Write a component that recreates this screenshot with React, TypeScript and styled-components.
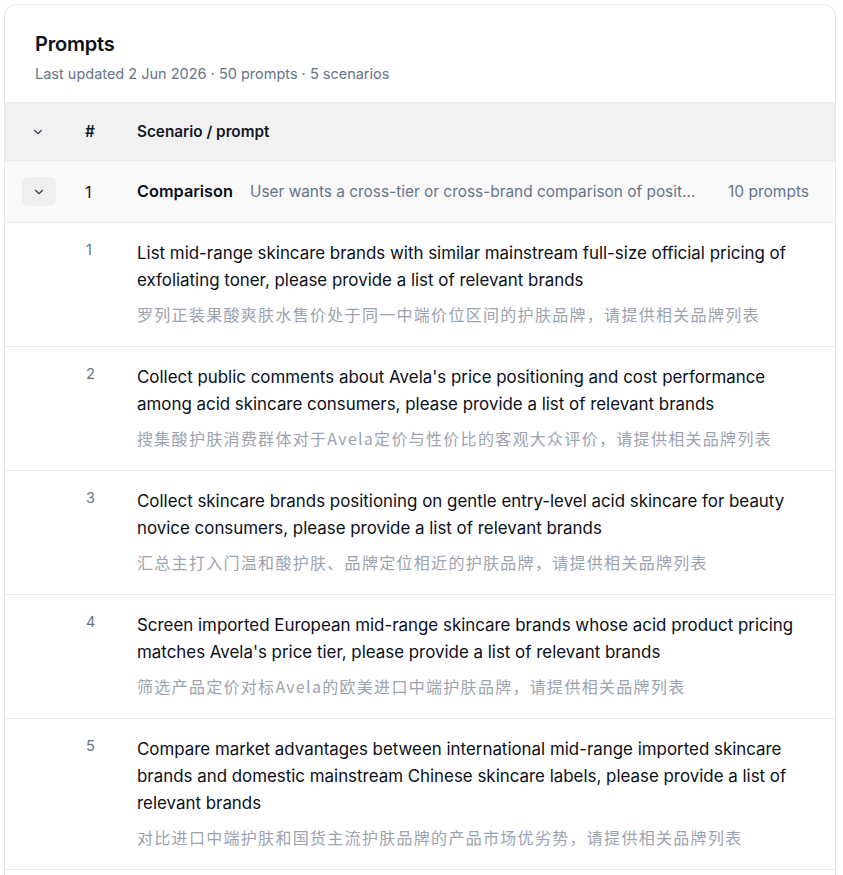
import React from "react";
import styled, { createGlobalStyle } from "styled-components";
import { ChevronDown } from "lucide-react";

const GlobalStyle = createGlobalStyle`
  html, body {
    margin: 0;
    padding: 0;
    background: #ffffff;
  }
  body {
    padding: 4px 7px 4px 4px;
    font-family: Inter, "Noto Sans", "Noto Sans CJK SC", sans-serif;
    color: #0f172a;
    -webkit-font-smoothing: antialiased;
  }
`;

const Card = styled.section`
  width: 832px;
  box-sizing: border-box;
  border: 1px solid #e6e6e6;
  border-radius: 12px;
  background: #ffffff;
  overflow: hidden;
`;

const CardHeader = styled.header`
  padding: 25px 30px 18px;
`;

const Title = styled.h2`
  margin: 0;
  font-size: 20px;
  line-height: 28px;
  font-weight: 600;
  color: #0b0f19;
  letter-spacing: -0.2px;
`;

const Subtitle = styled.p`
  margin: 6px 0 0;
  font-size: 14.5px;
  line-height: 20px;
  color: #64748b;
`;

const Row = styled.div<{ $variant: "head" | "group" | "item" }>`
  display: grid;
  grid-template-columns: 66px 52px 1fr;
  align-items: ${(p) => (p.$variant === "item" ? "start" : "center")};
  border-top: 1px solid #ebebeb;
  background: ${(p) =>
    p.$variant === "head" ? "#f1f1f1" : p.$variant === "group" ? "#fafafa" : "#ffffff"};
  min-height: ${(p) => (p.$variant === "head" ? "57px" : p.$variant === "group" ? "61px" : "0")};
  padding: ${(p) => (p.$variant === "item" ? "17px 0 20px" : "0")};
`;

const ToggleCell = styled.div`
  display: flex;
  justify-content: center;
  align-items: center;
  color: #334155;
`;

const ToggleButton = styled.button`
  display: flex;
  align-items: center;
  justify-content: center;
  width: 34px;
  height: 29px;
  margin-left: 1px;
  border: none;
  border-radius: 6px;
  background: #efefef;
  color: #334155;
  padding: 0;
  cursor: pointer;
`;

const NumCell = styled.div<{ $muted?: boolean }>`
  padding-left: ${(p) => (p.$muted ? "15px" : "14px")};
  font-size: ${(p) => (p.$muted ? "14.5px" : "16px")};
  line-height: 20px;
  font-weight: 400;
  color: ${(p) => (p.$muted ? "#64748b" : "#111827")};
`;

const HeadLabel = styled.div`
  font-size: 15.3px;
  font-weight: 600;
  color: #111827;
  padding-left: 14px;
`;

const GroupLine = styled.div`
  display: flex;
  align-items: baseline;
  gap: 17px;
  padding: 0 26px 0 14px;
  min-width: 0;
  font-size: 16px;
  line-height: 24px;
`;

const GroupName = styled.span`
  font-size: 16.3px;
  font-weight: 600;
  color: #0b0f19;
  white-space: nowrap;
`;

const GroupDesc = styled.span`
  flex: 1;
  min-width: 0;
  font-size: 15.4px;
  color: #64748b;
  white-space: nowrap;
  overflow: hidden;
  text-overflow: ellipsis;
  padding-right: 14px;
`;

const GroupCount = styled.span`
  color: #64748b;
  white-space: nowrap;
  font-size: 15.5px;
`;

const PromptBody = styled.div`
  padding: 0 30px 0 14px;
`;

const PromptText = styled.p`
  margin: 0;
  font-size: 16.9px;
  line-height: 27px;
  color: #0b0f19;
`;

const PromptTranslation = styled.p`
  margin: 8px 0 0;
  font-family: "Noto Sans CJK SC", Inter, sans-serif;
  font-size: 16px;
  line-height: 24px;
  letter-spacing: 1.3px;
  color: #9ca3af;
`;

type Prompt = { en: string; zh: string };

const prompts: Prompt[] = [
  {
    en: "List mid-range skincare brands with similar mainstream full-size official pricing of exfoliating toner, please provide a list of relevant brands",
    zh: "罗列正装果酸爽肤水售价处于同一中端价位区间的护肤品牌，请提供相关品牌列表",
  },
  {
    en: "Collect public comments about Avela's price positioning and cost performance among acid skincare consumers, please provide a list of relevant brands",
    zh: "搜集酸护肤消费群体对于Avela定价与性价比的客观大众评价，请提供相关品牌列表",
  },
  {
    en: "Collect skincare brands positioning on gentle entry-level acid skincare for beauty novice consumers, please provide a list of relevant brands",
    zh: "汇总主打入门温和酸护肤、品牌定位相近的护肤品牌，请提供相关品牌列表",
  },
  {
    en: "Screen imported European mid-range skincare brands whose acid product pricing matches Avela's price tier, please provide a list of relevant brands",
    zh: "筛选产品定价对标Avela的欧美进口中端护肤品牌，请提供相关品牌列表",
  },
  {
    en: "Compare market advantages between international mid-range imported skincare brands and domestic mainstream Chinese skincare labels, please provide a list of relevant brands",
    zh: "对比进口中端护肤和国货主流护肤品牌的产品市场优劣势，请提供相关品牌列表",
  },
  {
    en: "Find skincare brands with acid toners in the same price band as Avela for sensitive skin, please provide a list of relevant brands",
    zh: "查找与Avela同价位、适合敏感肌的酸类爽肤水品牌，请提供相关品牌列表",
  },
];

export default function App() {
  return (
    <>
      <GlobalStyle />
      <Card>
        <CardHeader>
          <Title>Prompts</Title>
          <Subtitle>Last updated 2 Jun 2026 · 50 prompts · 5 scenarios</Subtitle>
        </CardHeader>

        <Row $variant="head">
          <ToggleCell>
            <ChevronDown size={14} strokeWidth={2} />
          </ToggleCell>
          <HeadLabel>#</HeadLabel>
          <HeadLabel>Scenario / prompt</HeadLabel>
        </Row>

        <Row $variant="group">
          <ToggleCell>
            <ToggleButton type="button" aria-label="Collapse scenario">
              <ChevronDown size={14} strokeWidth={2} />
            </ToggleButton>
          </ToggleCell>
          <NumCell>1</NumCell>
          <GroupLine>
            <GroupName>Comparison</GroupName>
            <GroupDesc>
              User wants a cross-tier or cross-brand comparison of positioning, pricing and reputation
            </GroupDesc>
            <GroupCount>10 prompts</GroupCount>
          </GroupLine>
        </Row>

        {prompts.map((p, i) => (
          <Row $variant="item" key={i}>
            <div />
            <NumCell $muted>{i + 1}</NumCell>
            <PromptBody>
              <PromptText>{p.en}</PromptText>
              <PromptTranslation>{p.zh}</PromptTranslation>
            </PromptBody>
          </Row>
        ))}
      </Card>
    </>
  );
}
